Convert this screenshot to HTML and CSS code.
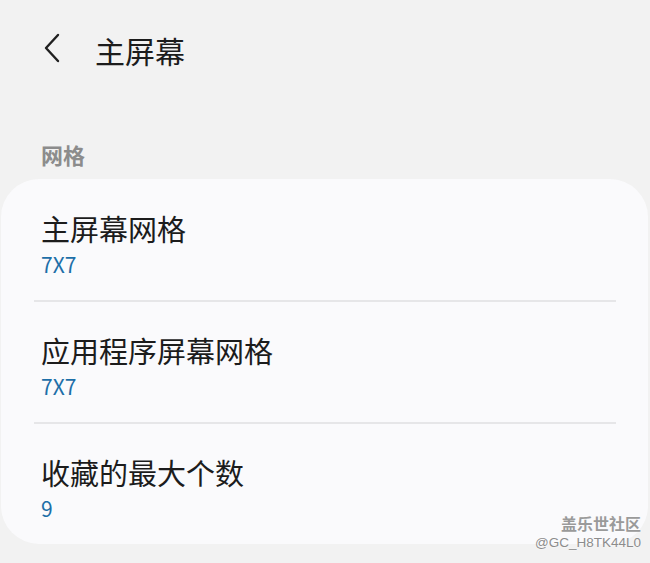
FILE: index.html
```html
<!DOCTYPE html>
<html lang="zh">
<head>
<meta charset="utf-8">
<link rel="stylesheet" href="styles.css">
</head>
<body>
<div class="page">
  <header class="topbar">
    <svg class="back" width="20" height="30" viewBox="0 0 20 30"><path d="M16 2 L4 15 L16 28" fill="none" stroke="#202020" stroke-width="2.4" stroke-linecap="round" stroke-linejoin="round"/></svg>
    <h1 class="title">主屏幕</h1>
  </header>
  <div class="section-label">网格</div>
  <div class="card">
    <div class="row">
      <div class="row-title">主屏幕网格</div>
      <div class="row-sub">7X7</div>
    </div>
    <div class="divider"></div>
    <div class="row">
      <div class="row-title">应用程序屏幕网格</div>
      <div class="row-sub">7X7</div>
    </div>
    <div class="divider"></div>
    <div class="row">
      <div class="row-title">收藏的最大个数</div>
      <div class="row-sub">9</div>
    </div>
  </div>
  <div class="watermark">
    <div class="wm1">盖乐世社区</div>
    <div class="wm2">@GC_H8TK44L0</div>
  </div>
</div>
</body>
</html>
```
FILE: styles.css
```css
html, body {
  margin: 0;
  padding: 0;
  background: #f2f2f2;
}
body {
  font-family: "Noto Sans CJK SC", "Noto Sans", sans-serif;
  width: 650px;
  height: 563px;
  overflow: hidden;
}
.page {
  position: relative;
  height: 563px;
}
.topbar {
  display: flex;
  align-items: center;
  height: 100px;
  padding-left: 42px;
  box-sizing: border-box;
}
.back {
  display: block;
  margin-top: -4px;
}
.title {
  margin: 0 0 0 33px;
  font-size: 30px;
  font-weight: 400;
  color: #1c1c1c;
  line-height: 36px;
}
.section-label {
  padding-left: 41px;
  margin-top: 39px;
  font-size: 22px;
  line-height: 30px;
  font-weight: 700;
  color: #8c8c8c;
  height: 40px;
}
.card {
  margin: 0 2px 0 1px;
  background: #fafafc;
  border-radius: 38px;
  height: 365px;
  box-sizing: border-box;
}
.row {
  padding: 31px 0 23px 40px;
}
.row-title {
  font-size: 29px;
  line-height: 36px;
  color: #1c1c1c;
}
.row-sub {
  margin-top: 4px;
  font-size: 21px;
  line-height: 28px;
  color: #1d6fa8;
}
.divider {
  height: 2px;
  background: #e6e6e8;
  margin: -1px 32px -1px 33px;
}
.watermark {
  position: absolute;
  right: 9px;
  bottom: 10px;
  text-align: right;
  color: #8f8f8f;
  text-shadow: 0 0 2px #ffffff;
}
.wm1 {
  font-size: 16px;
  line-height: 20px;
  font-weight: 700;
  color: #9a9a9a;
}
.wm2 {
  font-size: 13.5px;
  line-height: 20px;
  font-family: "Liberation Sans", sans-serif;
  color: #8c8c8c;
}
```
